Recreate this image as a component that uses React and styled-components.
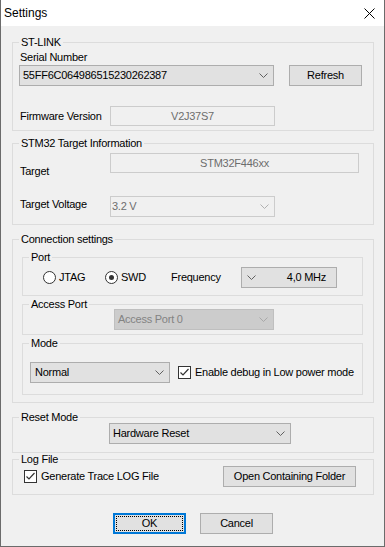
import React from "react";
import styled, { createGlobalStyle, css } from "styled-components";

const GlobalStyle = createGlobalStyle`
  html, body {
    margin: 0;
    padding: 0;
    background: #f0f0f0;
  }
`;

const Window = styled.div`
  width: 385px;
  height: 547px;
  box-sizing: border-box;
  border: 1px solid #6b6b6b;
  border-top: none;
  background: #f0f0f0;
  display: flex;
  flex-direction: column;
  font-family: "Liberation Sans", Arial, sans-serif;
  font-size: 11px;
  line-height: 13px;
  letter-spacing: -0.25px;
  color: #000;
`;

const TitleBar = styled.div`
  height: 26px;
  flex-shrink: 0;
  background: #fff;
  display: flex;
  align-items: center;
  justify-content: space-between;
  padding: 0 9px 0 3px;
`;

const Title = styled.span`
  font-size: 12px;
  letter-spacing: 0;
`;

const Body = styled.div`
  padding: 10px 10px 0 11px;
  display: flex;
  flex-direction: column;
`;

const GroupBox = styled.fieldset`
  margin: ${(p) => p.$mt || 0}px 0 0;
  padding: 0;
  border: 1px solid #dcdcdc;
  min-width: 0;
`;

const Caption = styled.legend`
  margin-left: 6px;
  padding: 0 2px;
  height: 13px;
  line-height: 13px;
`;

const GroupBody = styled.div`
  display: flex;
  flex-direction: column;
  padding: ${(p) => p.$pad};
`;

const Row = styled.div`
  display: flex;
  align-items: ${(p) => p.$align || "flex-start"};
  margin-top: ${(p) => p.$mt || 0}px;
`;

const Label = styled.span`
  flex-shrink: 0;
  white-space: nowrap;
  width: ${(p) => (p.$w ? `${p.$w}px` : "auto")};
  margin-top: ${(p) => p.$mt || 0}px;
  margin-left: ${(p) => p.$ml || 0}px;
`;

const comboVariants = {
  normal: css`
    background: #e1e1e1;
    border-color: #adadad;
    color: #000;
  `,
  disabled: css`
    background: #cccccc;
    border-color: #bfbfbf;
    color: #838383;
  `,
  edit: css`
    background: #f0f0f0;
    border-color: #cccccc;
    color: #6d6d6d;
  `,
};

const Combo = styled.div`
  box-sizing: border-box;
  flex-shrink: 0;
  width: ${(p) => p.$w}px;
  height: 21px;
  margin-left: ${(p) => p.$ml || 0}px;
  margin-top: ${(p) => p.$mt || 0}px;
  border: 1px solid;
  display: flex;
  align-items: center;
  flex-direction: ${(p) => (p.$arrowLeft ? "row-reverse" : "row")};
  padding: ${(p) => (p.$arrowLeft ? "0 10px 0 5px" : `0 5px 0 ${p.$pl ?? 3}px`)};
  ${(p) => comboVariants[p.$variant || "normal"]}
`;

const ComboText = styled.span`
  flex: 1;
  white-space: nowrap;
  text-align: ${(p) => (p.$right ? "right" : "left")};
`;

const ReadOnlyBox = styled.div`
  box-sizing: border-box;
  flex-shrink: 0;
  width: ${(p) => p.$w}px;
  height: 20px;
  border: 1px solid #cccccc;
  background: #f0f0f0;
  color: #6d6d6d;
  display: flex;
  align-items: center;
  justify-content: center;
`;

const Button = styled.button`
  box-sizing: border-box;
  flex-shrink: 0;
  width: ${(p) => p.$w}px;
  height: 21px;
  margin-left: ${(p) => p.$ml || 0}px;
  padding: 0;
  font: inherit;
  letter-spacing: inherit;
  color: #000;
  background: #e1e1e1;
  border: 1px solid #adadad;
  ${(p) =>
    p.$default &&
    css`
      border: 2px solid #0078d7;
      outline: 1px dotted #000;
      outline-offset: -4px;
    `}
`;

const Option = styled.label`
  display: flex;
  align-items: center;
  flex-shrink: 0;
  width: ${(p) => (p.$w ? `${p.$w}px` : "auto")};
  margin-left: ${(p) => p.$ml || 0}px;
  gap: ${(p) => p.$gap || 3}px;
  white-space: nowrap;
`;

const RadioDot = styled.span`
  box-sizing: border-box;
  width: 13px;
  height: 13px;
  border: 1px solid #333;
  border-radius: 50%;
  background: #fff;
  display: inline-flex;
  align-items: center;
  justify-content: center;
  &::after {
    content: "";
    display: ${(p) => (p.$checked ? "block" : "none")};
    width: 5px;
    height: 5px;
    border-radius: 50%;
    background: #333;
  }
`;

const CheckBox = styled.span`
  box-sizing: border-box;
  width: 13px;
  height: 13px;
  border: 1px solid #333;
  background: #fff;
  display: inline-flex;
  align-items: center;
  justify-content: center;
`;

const Footer = styled.div`
  display: flex;
  margin-top: 18px;
`;

const Chevron = ({ color = "#606060" }) => (
  <svg width="9" height="5" viewBox="0 0 9 5">
    <polyline points="0.5,0.5 4.5,4.5 8.5,0.5" fill="none" stroke={color} strokeWidth="1" />
  </svg>
);

const CloseIcon = () => (
  <svg width="11" height="11" viewBox="0 0 11 11">
    <path d="M0.5 0.5 L10.5 10.5 M10.5 0.5 L0.5 10.5" stroke="#000" strokeWidth="1" />
  </svg>
);

const Check = () => (
  <svg width="11" height="11" viewBox="0 0 11 11">
    <polyline points="1.5,5.5 4,8 9.5,2" fill="none" stroke="#333" strokeWidth="1.2" />
  </svg>
);

const Radio = ({ checked, label, ...rest }) => (
  <Option {...rest}>
    <RadioDot $checked={checked} />
    {label}
  </Option>
);

const CheckOption = ({ label, ...rest }) => (
  <Option $gap={4} {...rest}>
    <CheckBox>
      <Check />
    </CheckBox>
    {label}
  </Option>
);

export default function App() {
  return (
    <>
      <GlobalStyle />
      <Window>
        <TitleBar>
          <Title>Settings</Title>
          <CloseIcon />
        </TitleBar>
        <Body>
          <GroupBox>
            <Caption>ST-LINK</Caption>
            <GroupBody $pad="2px 0 4px 6px">
              <Label $ml={1}>Serial Number</Label>
              <Row $mt={1}>
                <Combo $w={255}>
                  <ComboText>55FF6C064986515230262387</ComboText>
                  <Chevron />
                </Combo>
                <Button $w={73} $ml={15}>Refresh</Button>
              </Row>
              <Row $mt={20} $align="center">
                <Label $w={90} $ml={1}>Firmware Version</Label>
                <ReadOnlyBox $w={165}>V2J37S7</ReadOnlyBox>
              </Row>
            </GroupBody>
          </GroupBox>

          <GroupBox $mt={6}>
            <Caption>STM32 Target Information</Caption>
            <GroupBody $pad="3px 0 7px 6px">
              <Row>
                <Label $w={90} $ml={1} $mt={12}>Target</Label>
                <ReadOnlyBox $w={249}>STM32F446xx</ReadOnlyBox>
              </Row>
              <Row $mt={18}>
                <Label $w={90} $ml={1} $mt={2}>Target Voltage</Label>
                <Combo $w={165} $variant="edit" $pl={1}>
                  <ComboText>3.2 V</ComboText>
                  <Chevron color="#b0b0b0" />
                </Combo>
              </Row>
            </GroupBody>
          </GroupBox>

          <GroupBox $mt={8}>
            <Caption>Connection settings</Caption>
            <GroupBody $pad="0 10px 7px 9px">
              <GroupBox $mt={5}>
                <Caption>Port</Caption>
                <GroupBody $pad="3px 0 7px 0">
                  <Row $align="center">
                    <Radio label="JTAG" $ml={20} $w={62} />
                    <Radio label="SWD" checked $w={66} />
                    <Label $w={70}>Frequency</Label>
                    <Combo $w={96} $arrowLeft>
                      <ComboText $right>4,0 MHz</ComboText>
                      <Chevron />
                    </Combo>
                  </Row>
                </GroupBody>
              </GroupBox>

              <GroupBox $mt={2}>
                <Caption>Access Port</Caption>
                <GroupBody $pad="0 0 4px 0">
                  <Combo $w={160} $ml={91} $mt={-2} $variant="disabled">
                    <ComboText>Access Port 0</ComboText>
                    <Chevron color="#a8a8a8" />
                  </Combo>
                </GroupBody>
              </GroupBox>

              <GroupBox $mt={2}>
                <Caption>Mode</Caption>
                <GroupBody $pad="12px 0 11px 0">
                  <Row $align="center">
                    <Combo $w={140} $ml={7} $pl={4}>
                      <ComboText>Normal</ComboText>
                      <Chevron />
                    </Combo>
                    <CheckOption label="Enable debug in Low power mode" $ml={8} />
                  </Row>
                </GroupBody>
              </GroupBox>
            </GroupBody>
          </GroupBox>

          <GroupBox $mt={8}>
            <Caption>Reset Mode</Caption>
            <GroupBody $pad="0 0 8px 6px">
              <Combo $w={182} $ml={90} $mt={-1}>
                <ComboText>Hardware Reset</ComboText>
                <Chevron />
              </Combo>
            </GroupBody>
          </GroupBox>

          <GroupBox>
            <Caption>Log File</Caption>
            <GroupBody $pad="0 0 7px 6px">
              <Row $align="center">
                <CheckOption label="Generate Trace LOG File" $ml={5} $w={199} />
                <Button $w={133}>Open Containing Folder</Button>
              </Row>
            </GroupBody>
          </GroupBox>

          <Footer>
            <Button $w={73} $ml={101} $default>OK</Button>
            <Button $w={73} $ml={14}>Cancel</Button>
          </Footer>
        </Body>
      </Window>
    </>
  );
}
